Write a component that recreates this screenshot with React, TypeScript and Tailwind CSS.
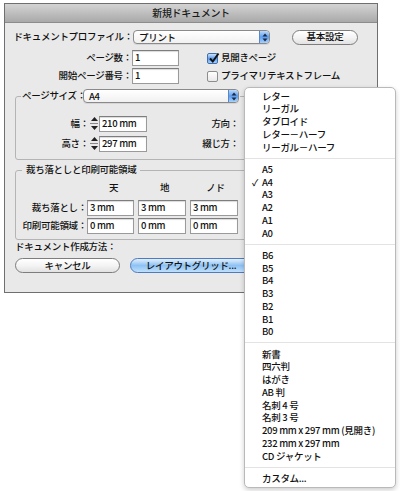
import type { ReactNode } from 'react'

const FONT = "font-['Noto_Sans_CJK_JP','Noto_Sans',sans-serif]"

function PopupArrows() {
  return (
    <span className="flex h-full w-[10px] shrink-0 items-center justify-center rounded-r-[4px] border-l border-[#5a86c4] bg-gradient-to-b from-[#bcd9fa] via-[#5b9ef0] to-[#a9d1fb]">
      <svg width="6" height="9" viewBox="0 0 6 9">
        <path d="M3 0.5 L5.5 3.5 H0.5 Z" fill="#1b2a44" />
        <path d="M3 8.5 L5.5 5.5 H0.5 Z" fill="#1b2a44" />
      </svg>
    </span>
  )
}

function Popup({ value, className }: { value: string; className: string }) {
  return (
    <div
      className={`flex h-[14px] shrink-0 items-center rounded-[4px] border border-[#8a8a8a] bg-gradient-to-b from-white to-[#f1f1f1] shadow-[0_1px_0_rgba(0,0,0,0.08)] ${className}`}
    >
      <span className="flex-1 whitespace-nowrap pl-[5px] leading-[12px]">{value}</span>
      <PopupArrows />
    </div>
  )
}

function Field({ value, className }: { value: string; className: string }) {
  return (
    <div
      className={`flex h-[16px] shrink-0 items-center border border-[#9a9a9a] border-t-[#7d7d7d] bg-white pl-[2px] leading-none shadow-[inset_0_1px_1px_rgba(0,0,0,0.15)] ${className}`}
    >
      {value}
    </div>
  )
}

function Stepper() {
  return (
    <div className="flex h-[15px] w-[10px] shrink-0 flex-col items-center justify-center gap-[2px]">
      <svg width="7" height="4" viewBox="0 0 7 4">
        <path d="M3.5 0 L7 4 H0 Z" fill="#222" />
      </svg>
      <div className="h-px w-[8px] bg-[#888]" />
      <svg width="7" height="4" viewBox="0 0 7 4">
        <path d="M3.5 4 L7 0 H0 Z" fill="#222" />
      </svg>
    </div>
  )
}

function Checkbox({ checked }: { checked: boolean }) {
  return checked ? (
    <span className="relative flex h-[11px] w-[11px] items-center justify-center rounded-[2px] border border-[#3f6fae] bg-gradient-to-b from-[#cbe2fb] via-[#5d9def] to-[#a6cffa]">
      <svg width="12" height="12" viewBox="0 0 12 12" className="absolute -top-[2px] left-[0px]">
        <path d="M2 6.5 L4.8 9.5 L10.5 1.5" fill="none" stroke="#111" strokeWidth="2" />
      </svg>
    </span>
  ) : (
    <span className="h-[11px] w-[11px] rounded-[2px] border border-[#8d8d8d] bg-gradient-to-b from-white to-[#e9e9e9]" />
  )
}

function PillButton({
  children,
  className,
  blue,
}: {
  children: ReactNode
  className: string
  blue?: boolean
}) {
  return (
    <div
      className={`flex h-[15px] shrink-0 items-center justify-center rounded-full border leading-none ${
        blue
          ? 'border-[#4d7bbd] bg-gradient-to-b from-[#e2effc] via-[#8ec2f4] to-[#bfe0fc]'
          : 'border-[#7d7d7d] bg-gradient-to-b from-white via-[#f4f4f4] to-[#e2e2e2]'
      } ${className}`}
    >
      {children}
    </div>
  )
}

function Label({ children, className }: { children: ReactNode; className: string }) {
  return (
    <div className={`flex shrink-0 justify-end whitespace-nowrap leading-none ${className}`}>{children}</div>
  )
}

function Dialog() {
  return (
    <div className="ml-[4px] mt-[3px] flex h-[290px] w-[374px] flex-col border border-[#6f6f6f] bg-[#e9e9e9] text-[#111]">
      <div className="flex h-[19px] shrink-0 items-center justify-center border-b border-[#8c8c8c] bg-gradient-to-b from-[#d4d4d4] to-[#a9a9a9] text-[10px] leading-none text-[#1a1a1a]">
        新規ドキュメント
      </div>

      <div className="flex flex-col px-[10px] pt-[7px]">
        <div className="flex h-[14px] items-center">
          <Label className="w-[118px]">ドキュメントプロファイル：</Label>
          <Popup value="プリント" className="w-[137px]" />
          <PillButton className="ml-[22px] w-[66px]">基本設定</PillButton>
        </div>

        <div className="mt-[6px] flex h-[16px] items-center">
          <Label className="w-[117px]">ページ数：</Label>
          <Field value="1" className="w-[47px]" />
          <div className="ml-[28px] flex items-center gap-[3px]">
            <Checkbox checked />
            <span className="leading-none">見開きページ</span>
          </div>
        </div>

        <div className="mt-[2px] flex h-[16px] items-center">
          <Label className="w-[117px]">開始ページ番号：</Label>
          <Field value="1" className="w-[47px]" />
          <div className="ml-[28px] flex items-center gap-[3px]">
            <Checkbox checked={false} />
            <span className="whitespace-nowrap leading-none">プライマリテキストフレーム</span>
          </div>
        </div>

        <fieldset className="mt-[5px] rounded-[3px] border border-[#b4b4b4] pb-[8px]">
          <legend className="ml-[5px] flex h-[14px] items-center pr-[1px]">
            <span className="w-[62px] whitespace-nowrap pl-[1px] leading-none">ページサイズ：</span>
            <Popup value="A4" className="w-[156px]" />
          </legend>
          <div className="mt-[13px] flex h-[15px] items-center">
            <Label className="w-[73px]">幅：</Label>
            <Stepper />
            <Field value="210 mm" className="h-[15px] w-[48px]" />
            <Label className="w-[92px]">方向：</Label>
          </div>
          <div className="mt-[5px] flex h-[15px] items-center">
            <Label className="w-[73px]">高さ：</Label>
            <Stepper />
            <Field value="297 mm" className="h-[15px] w-[48px]" />
            <Label className="w-[92px]">綴じ方：</Label>
          </div>
        </fieldset>

        <fieldset className="mt-[3px] rounded-[3px] border border-[#b4b4b4] pb-[5px]">
          <legend className="ml-[6px] flex h-[14px] items-center whitespace-nowrap px-[4px] leading-none">
            裁ち落としと印刷可能領域
          </legend>
          <div className="mt-[5px] flex h-[12px] items-center pl-[72px] leading-none">
            <span className="w-[51px] text-center">天</span>
            <span className="w-[51px] text-center">地</span>
            <span className="w-[51px] text-center">ノド</span>
          </div>
          <div className="mt-[6px] flex h-[16px] items-center">
            <Label className="w-[71px]">裁ち落とし：</Label>
            <div className="flex gap-[4px]">
              <Field value="3 mm" className="w-[47px]" />
              <Field value="3 mm" className="w-[48px]" />
              <Field value="3 mm" className="w-[48px]" />
            </div>
          </div>
          <div className="mt-[2px] flex h-[16px] items-center">
            <Label className="w-[71px]">印刷可能領域：</Label>
            <div className="flex gap-[4px]">
              <Field value="0 mm" className="w-[47px]" />
              <Field value="0 mm" className="w-[48px]" />
              <Field value="0 mm" className="w-[48px]" />
            </div>
          </div>
        </fieldset>

        <div className="mt-[1px] flex h-[12px] items-center leading-none">ドキュメント作成方法：</div>

        <div className="mt-[5px] flex h-[15px] items-center">
          <PillButton className="w-[105px]">キャンセル</PillButton>
          <PillButton blue className="ml-[10px] w-[122px]">
            レイアウトグリッド...
          </PillButton>
        </div>
      </div>
    </div>
  )
}

const groups: string[][] = [
  ['レター', 'リーガル', 'タブロイド', 'レター－ハーフ', 'リーガル－ハーフ'],
  ['A5', 'A4', 'A3', 'A2', 'A1', 'A0'],
  ['B6', 'B5', 'B4', 'B3', 'B2', 'B1', 'B0'],
  [
    '新書',
    '四六判',
    'はがき',
    'AB 判',
    '名刺 4 号',
    '名刺 3 号',
    '209 mm x 297 mm (見開き)',
    '232 mm x 297 mm',
    'CD ジャケット',
  ],
  ['カスタム...'],
]

function Menu() {
  return (
    <div className="absolute left-[244px] top-[87px] flex h-[401px] w-[152px] flex-col rounded-[5px] border border-[#b9b9b9] bg-white pb-[4px] pt-[2px] shadow-[0_2px_5px_rgba(0,0,0,0.2)]">
      {groups.map((items, gi) => (
        <div key={gi} className="flex flex-col">
          {gi > 0 && (
            <div className="flex h-[9.5px] items-center">
              <div className="h-[2px] w-full border-t border-[#e3e3e3] border-b-[#f4f4f4]" />
            </div>
          )}
          {items.map((item) => (
            <div
              key={item}
              className="relative flex h-[12.75px] items-center whitespace-nowrap pl-[17px] leading-none text-[#111]"
            >
              {item === 'A4' && <span className="absolute left-[7px] text-[9px]">✓</span>}
              {item}
            </div>
          ))}
        </div>
      ))}
    </div>
  )
}

export default function App() {
  return (
    <div className={`relative h-[491px] w-[400px] overflow-hidden bg-white text-[9.5px] font-medium tracking-[-0.3px] ${FONT}`}>
      <Dialog />
      <Menu />
    </div>
  )
}
